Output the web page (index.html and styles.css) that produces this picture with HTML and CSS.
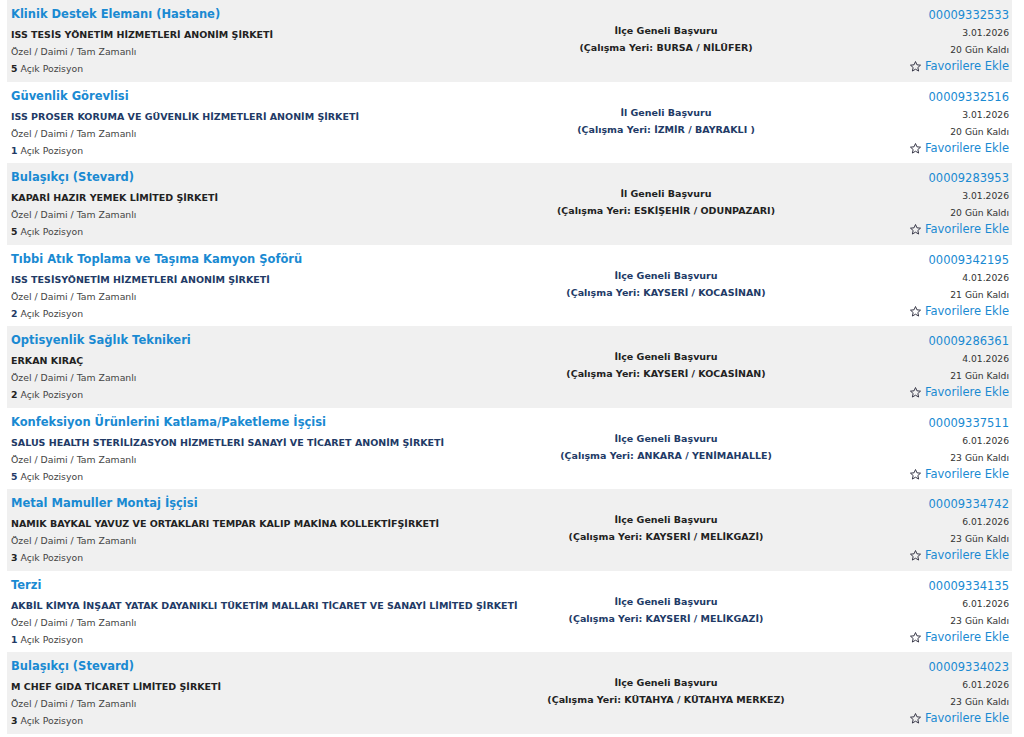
FILE: index.html
```html
<!DOCTYPE html>
<html lang="tr">
<head>
<meta charset="utf-8">
<title>İlanlar</title>
<link rel="stylesheet" href="styles.css">
</head>
<body>
<div class="list">

<div class="row">
  <div class="col-left">
    <a class="title">Klinik Destek Elemanı (Hastane)</a>
    <div class="company">ISS TESİS YÖNETİM HİZMETLERİ ANONİM ŞİRKETİ</div>
    <div class="meta">Özel / Daimi / Tam Zamanlı</div>
    <div class="meta"><b>5</b> Açık Pozisyon</div>
  </div>
  <div class="col-mid">
    <div>İlçe Geneli Başvuru</div>
    <div>(Çalışma Yeri: BURSA / NİLÜFER)</div>
  </div>
  <div class="col-right">
    <a class="num">00009332533</a>
    <div class="date">3.01.2026</div>
    <div class="date">20 Gün Kaldı</div>
    <a class="fav"><svg viewBox="0 0 24 24"><path d="M12 2.8l2.7 6.1 6.6.6-5 4.4 1.5 6.5L12 17l-5.8 3.4 1.5-6.5-5-4.4 6.6-.6z"/></svg>Favorilere Ekle</a>
  </div>
</div>

<div class="row">
  <div class="col-left">
    <a class="title">Güvenlik Görevlisi</a>
    <div class="company">ISS PROSER KORUMA VE GÜVENLİK HİZMETLERİ ANONİM ŞİRKETİ</div>
    <div class="meta">Özel / Daimi / Tam Zamanlı</div>
    <div class="meta"><b>1</b> Açık Pozisyon</div>
  </div>
  <div class="col-mid">
    <div>İl Geneli Başvuru</div>
    <div>(Çalışma Yeri: İZMİR / BAYRAKLI )</div>
  </div>
  <div class="col-right">
    <a class="num">00009332516</a>
    <div class="date">3.01.2026</div>
    <div class="date">20 Gün Kaldı</div>
    <a class="fav"><svg viewBox="0 0 24 24"><path d="M12 2.8l2.7 6.1 6.6.6-5 4.4 1.5 6.5L12 17l-5.8 3.4 1.5-6.5-5-4.4 6.6-.6z"/></svg>Favorilere Ekle</a>
  </div>
</div>

<div class="row">
  <div class="col-left">
    <a class="title">Bulaşıkçı (Stevard)</a>
    <div class="company">KAPARİ HAZIR YEMEK LİMİTED ŞİRKETİ</div>
    <div class="meta">Özel / Daimi / Tam Zamanlı</div>
    <div class="meta"><b>5</b> Açık Pozisyon</div>
  </div>
  <div class="col-mid">
    <div>İl Geneli Başvuru</div>
    <div>(Çalışma Yeri: ESKİŞEHİR / ODUNPAZARI)</div>
  </div>
  <div class="col-right">
    <a class="num">00009283953</a>
    <div class="date">3.01.2026</div>
    <div class="date">20 Gün Kaldı</div>
    <a class="fav"><svg viewBox="0 0 24 24"><path d="M12 2.8l2.7 6.1 6.6.6-5 4.4 1.5 6.5L12 17l-5.8 3.4 1.5-6.5-5-4.4 6.6-.6z"/></svg>Favorilere Ekle</a>
  </div>
</div>

<div class="row">
  <div class="col-left">
    <a class="title">Tıbbi Atık Toplama ve Taşıma Kamyon Şoförü</a>
    <div class="company">ISS TESİSYÖNETİM HİZMETLERİ ANONİM ŞİRKETİ</div>
    <div class="meta">Özel / Daimi / Tam Zamanlı</div>
    <div class="meta"><b>2</b> Açık Pozisyon</div>
  </div>
  <div class="col-mid">
    <div>İlçe Geneli Başvuru</div>
    <div>(Çalışma Yeri: KAYSERİ / KOCASİNAN)</div>
  </div>
  <div class="col-right">
    <a class="num">00009342195</a>
    <div class="date">4.01.2026</div>
    <div class="date">21 Gün Kaldı</div>
    <a class="fav"><svg viewBox="0 0 24 24"><path d="M12 2.8l2.7 6.1 6.6.6-5 4.4 1.5 6.5L12 17l-5.8 3.4 1.5-6.5-5-4.4 6.6-.6z"/></svg>Favorilere Ekle</a>
  </div>
</div>

<div class="row">
  <div class="col-left">
    <a class="title">Optisyenlik Sağlık Teknikeri</a>
    <div class="company">ERKAN KIRAÇ</div>
    <div class="meta">Özel / Daimi / Tam Zamanlı</div>
    <div class="meta"><b>2</b> Açık Pozisyon</div>
  </div>
  <div class="col-mid">
    <div>İlçe Geneli Başvuru</div>
    <div>(Çalışma Yeri: KAYSERİ / KOCASİNAN)</div>
  </div>
  <div class="col-right">
    <a class="num">00009286361</a>
    <div class="date">4.01.2026</div>
    <div class="date">21 Gün Kaldı</div>
    <a class="fav"><svg viewBox="0 0 24 24"><path d="M12 2.8l2.7 6.1 6.6.6-5 4.4 1.5 6.5L12 17l-5.8 3.4 1.5-6.5-5-4.4 6.6-.6z"/></svg>Favorilere Ekle</a>
  </div>
</div>

<div class="row">
  <div class="col-left">
    <a class="title">Konfeksiyon Ürünlerini Katlama/Paketleme İşçisi</a>
    <div class="company">SALUS HEALTH STERİLİZASYON HİZMETLERİ SANAYİ VE TİCARET ANONİM ŞİRKETİ</div>
    <div class="meta">Özel / Daimi / Tam Zamanlı</div>
    <div class="meta"><b>5</b> Açık Pozisyon</div>
  </div>
  <div class="col-mid">
    <div>İlçe Geneli Başvuru</div>
    <div>(Çalışma Yeri: ANKARA / YENİMAHALLE)</div>
  </div>
  <div class="col-right">
    <a class="num">00009337511</a>
    <div class="date">6.01.2026</div>
    <div class="date">23 Gün Kaldı</div>
    <a class="fav"><svg viewBox="0 0 24 24"><path d="M12 2.8l2.7 6.1 6.6.6-5 4.4 1.5 6.5L12 17l-5.8 3.4 1.5-6.5-5-4.4 6.6-.6z"/></svg>Favorilere Ekle</a>
  </div>
</div>

<div class="row">
  <div class="col-left">
    <a class="title">Metal Mamuller Montaj İşçisi</a>
    <div class="company">NAMIK BAYKAL YAVUZ VE ORTAKLARI TEMPAR KALIP MAKİNA KOLLEKTİFŞİRKETİ</div>
    <div class="meta">Özel / Daimi / Tam Zamanlı</div>
    <div class="meta"><b>3</b> Açık Pozisyon</div>
  </div>
  <div class="col-mid">
    <div>İlçe Geneli Başvuru</div>
    <div>(Çalışma Yeri: KAYSERİ / MELİKGAZİ)</div>
  </div>
  <div class="col-right">
    <a class="num">00009334742</a>
    <div class="date">6.01.2026</div>
    <div class="date">23 Gün Kaldı</div>
    <a class="fav"><svg viewBox="0 0 24 24"><path d="M12 2.8l2.7 6.1 6.6.6-5 4.4 1.5 6.5L12 17l-5.8 3.4 1.5-6.5-5-4.4 6.6-.6z"/></svg>Favorilere Ekle</a>
  </div>
</div>

<div class="row">
  <div class="col-left">
    <a class="title">Terzi</a>
    <div class="company">AKBİL KİMYA İNŞAAT YATAK DAYANIKLI TÜKETİM MALLARI TİCARET VE SANAYİ LİMİTED ŞİRKETİ</div>
    <div class="meta">Özel / Daimi / Tam Zamanlı</div>
    <div class="meta"><b>1</b> Açık Pozisyon</div>
  </div>
  <div class="col-mid">
    <div>İlçe Geneli Başvuru</div>
    <div>(Çalışma Yeri: KAYSERİ / MELİKGAZİ)</div>
  </div>
  <div class="col-right">
    <a class="num">00009334135</a>
    <div class="date">6.01.2026</div>
    <div class="date">23 Gün Kaldı</div>
    <a class="fav"><svg viewBox="0 0 24 24"><path d="M12 2.8l2.7 6.1 6.6.6-5 4.4 1.5 6.5L12 17l-5.8 3.4 1.5-6.5-5-4.4 6.6-.6z"/></svg>Favorilere Ekle</a>
  </div>
</div>

<div class="row">
  <div class="col-left">
    <a class="title">Bulaşıkçı (Stevard)</a>
    <div class="company">M CHEF GIDA TİCARET LİMİTED ŞİRKETİ</div>
    <div class="meta">Özel / Daimi / Tam Zamanlı</div>
    <div class="meta"><b>3</b> Açık Pozisyon</div>
  </div>
  <div class="col-mid">
    <div>İlçe Geneli Başvuru</div>
    <div>(Çalışma Yeri: KÜTAHYA / KÜTAHYA MERKEZ)</div>
  </div>
  <div class="col-right">
    <a class="num">00009334023</a>
    <div class="date">6.01.2026</div>
    <div class="date">23 Gün Kaldı</div>
    <a class="fav"><svg viewBox="0 0 24 24"><path d="M12 2.8l2.7 6.1 6.6.6-5 4.4 1.5 6.5L12 17l-5.8 3.4 1.5-6.5-5-4.4 6.6-.6z"/></svg>Favorilere Ekle</a>
  </div>
</div>

</div>
</body>
</html>
```
FILE: styles.css
```css
html, body {
  margin: 0;
  padding: 0;
  background: #ffffff;
}
body {
  font-family: "DejaVu Sans", Verdana, sans-serif;
  color: #333;
  overflow: hidden;
}
.list {
  margin: 0 12px 0 7px;
  display: flex;
  flex-direction: column;
}
.row {
  height: 81.5px;
  box-sizing: border-box;
  display: flex;
  background: #f0f0f0;
}
.row:nth-child(even) {
  background: #ffffff;
}
.col-left {
  width: 523px;
  padding: 5px 0 0 4px;
  box-sizing: border-box;
  display: flex;
  flex-direction: column;
}
.title {
  font-size: 11.5px;
  font-weight: bold;
  color: #1a8ad2;
  line-height: 18px;
  height: 21px;
  white-space: nowrap;
}
.company {
  font-size: 9.5px;
  font-weight: bold;
  color: #222;
  line-height: 17px;
  white-space: nowrap;
}
.meta {
  font-size: 9.3px;
  color: #444;
  line-height: 17px;
}
.meta b {
  color: #222;
}
.row:nth-child(even) .company,
.row:nth-child(even) .meta b,
.row:nth-child(even) .col-mid {
  color: #223a66;
}
.col-mid {
  flex: 1;
  display: flex;
  flex-direction: column;
  align-items: center;
  padding-top: 22px;
  font-size: 9.5px;
  font-weight: bold;
  line-height: 17px;
  color: #222;
}
.col-right {
  width: 210px;
  padding: 6px 3px 0 0;
  box-sizing: border-box;
  display: flex;
  flex-direction: column;
  align-items: flex-end;
}
.num {
  font-size: 11.5px;
  color: #1a8ad2;
  line-height: 18px;
  height: 18px;
}
.date {
  font-size: 9.2px;
  color: #333;
  line-height: 17px;
}
.fav {
  font-size: 11.5px;
  color: #1a8ad2;
  line-height: 17px;
  display: flex;
  align-items: center;
  gap: 3px;
}
.fav svg {
  width: 13px;
  height: 13px;
  fill: none;
  stroke: #334;
  stroke-width: 1.8;
  stroke-linejoin: round;
}
```
